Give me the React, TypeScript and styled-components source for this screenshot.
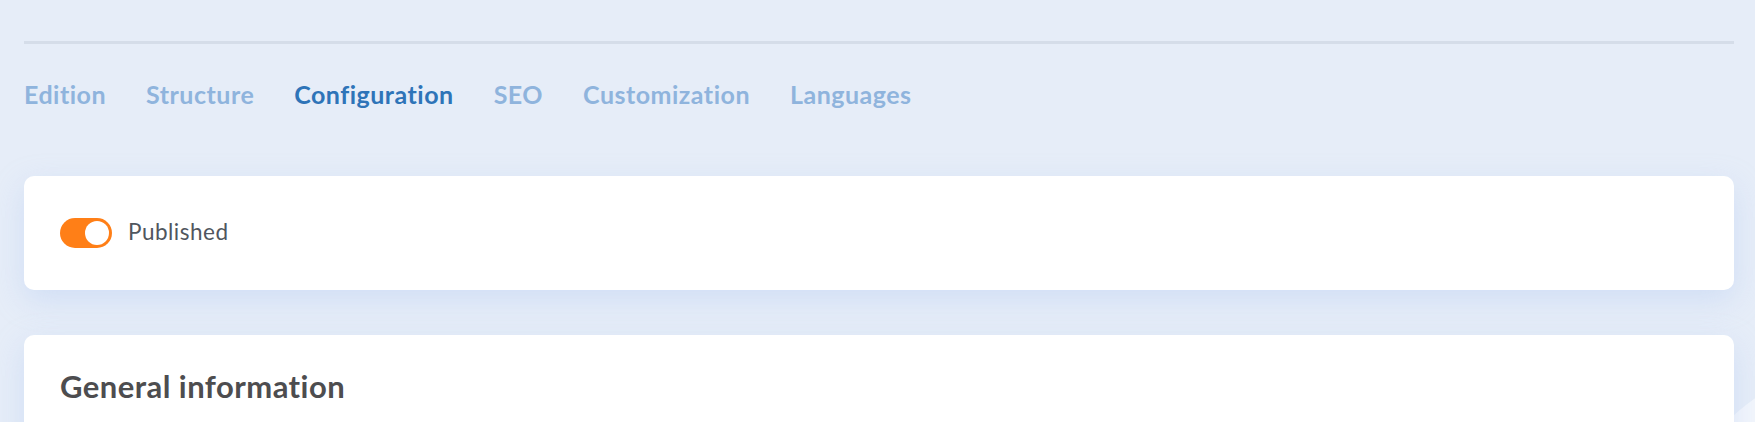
import React, { useState } from "react";
import styled, { createGlobalStyle } from "styled-components";

const GlobalStyle = createGlobalStyle`
  html, body {
    margin: 0;
    padding: 0;
    background: #e6edf8;
    font-family: Lato, "Open Sans", sans-serif;
    overflow: hidden;
  }
`;

const Page = styled.div`
  position: relative;
  min-height: 422px;
  padding: 41px 21px 0 24px;
  box-sizing: border-box;
  overflow: hidden;
`;

const Decoration = styled.div`
  position: absolute;
  left: 1650px;
  top: 352px;
  width: 500px;
  height: 500px;
  border-radius: 50%;
  background: rgba(255, 255, 255, 0.5);
  pointer-events: none;
`;

const Content = styled.div`
  position: relative;
  display: flex;
  flex-direction: column;
`;

const Divider = styled.hr`
  margin: 0;
  border: none;
  height: 3px;
  background: #d5dde9;
`;

const TabBar = styled.nav`
  display: flex;
  gap: 40px;
  margin-top: 35px;
`;

const Tab = styled.button<{ $active?: boolean }>`
  border: none;
  background: none;
  padding: 0;
  font-family: Lato, "Open Sans", sans-serif;
  font-weight: 700;
  font-size: 25px;
  letter-spacing: 0.5px;
  line-height: 30px;
  color: ${(p) => (p.$active ? "#2e74b8" : "#8fb4dd")};
  cursor: pointer;
`;

const Card = styled.section`
  background: #ffffff;
  border-radius: 10px;
  box-shadow: 0 10px 30px rgba(170, 195, 240, 0.35);
`;

const StatusCard = styled(Card)`
  margin-top: 67px;
  height: 114px;
  padding: 0 36px;
  display: flex;
  align-items: center;
  box-sizing: border-box;
`;

const InfoCard = styled(Card)`
  margin-top: 45px;
  padding: 33px 36px 40px;
`;

const SwitchLabel = styled.label`
  display: flex;
  align-items: center;
  gap: 16px;
  cursor: pointer;
`;

const Track = styled.span<{ $on: boolean }>`
  position: relative;
  display: inline-block;
  width: 52px;
  height: 30px;
  border-radius: 15px;
  background: ${(p) => (p.$on ? "#ff7f17" : "#c9d3e0")};
`;

const Knob = styled.span<{ $on: boolean }>`
  position: absolute;
  top: 3px;
  left: ${(p) => (p.$on ? "25px" : "3px")};
  width: 24px;
  height: 24px;
  border-radius: 50%;
  background: #ffffff;
`;

const SwitchText = styled.span`
  font-size: 22.5px;
  letter-spacing: 0.5px;
  line-height: 27px;
  padding-bottom: 4px;
  color: #50565e;
`;

const Heading = styled.h2`
  margin: 0;
  font-size: 31px;
  letter-spacing: 0.45px;
  line-height: 37px;
  font-weight: 700;
  color: #4d4d4f;
`;

const tabs = ["Edition", "Structure", "Configuration", "SEO", "Customization", "Languages"];

export default function App() {
  const [active, setActive] = useState("Configuration");
  const [published, setPublished] = useState(true);
  return (
    <>
      <GlobalStyle />
      <Page>
        <Decoration />
        <Content>
          <Divider />
          <TabBar>
            {tabs.map((t) => (
              <Tab key={t} $active={t === active} onClick={() => setActive(t)}>
                {t}
              </Tab>
            ))}
          </TabBar>
          <StatusCard>
            <SwitchLabel onClick={() => setPublished(!published)}>
              <Track $on={published}>
                <Knob $on={published} />
              </Track>
              <SwitchText>Published</SwitchText>
            </SwitchLabel>
          </StatusCard>
          <InfoCard>
            <Heading>General information</Heading>
          </InfoCard>
        </Content>
      </Page>
    </>
  );
}
